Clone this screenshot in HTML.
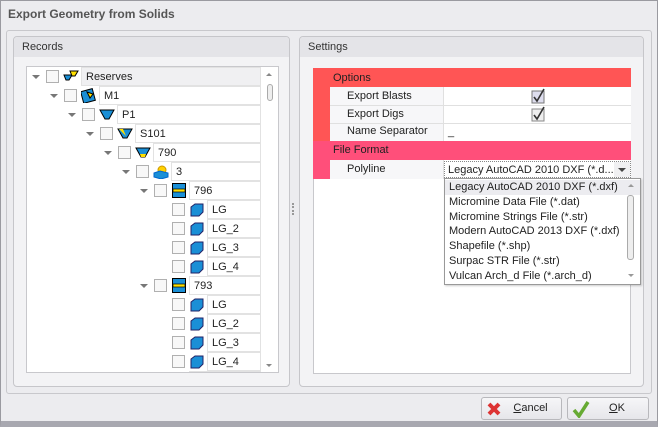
<!DOCTYPE html><html><head><style>
*{box-sizing:border-box;margin:0;padding:0}
body{width:658px;height:427px;background:#ececef;font-family:"Liberation Sans",sans-serif;font-size:11px;color:#222;position:relative;overflow:hidden}
.a{position:absolute}
.title{left:8px;top:7px;font-weight:bold;font-size:12px;color:#555}
.outer{left:6px;top:30px;width:646px;height:364px;border:1px solid #c8c8cc;border-radius:3px;background:#ececef}
.grp{border:1px solid #c6c6ca;border-radius:4px;background:#f3f3f5}
.gh{position:absolute;left:0;top:0;right:0;height:20px;background:#e4e4e8;padding:4px 8px;color:#333;border-radius:4px 4px 0 0}
.tree{left:26px;top:66px;width:253px;height:307px;border:1px solid #c8c8cc;background:#fff;overflow:hidden}
.row{position:absolute;height:19px;left:0;right:17px}
.exp{position:absolute;width:0;height:0;border-left:4px solid transparent;border-right:4px solid transparent;border-top:4px solid #777;top:8px}
.cb{position:absolute;width:13px;height:13px;border:1px solid #b0b0b0;background:#f8f8f8;top:3px}
.tx{position:absolute;top:0;height:19px;right:0;border:1px solid #e2e2e2;padding:3px 4px;background:#fff}
.ic{position:absolute;top:2px;width:16px;height:15px}
.dd div{height:14.8px;padding:1px 4px;white-space:nowrap}
.btn{height:23px;border:1px solid #b8b8bc;border-radius:3px;background:linear-gradient(#f6f6f8,#e6e6ea);text-align:center;line-height:21px}
</style></head><body>
<div class="a" style="left:0;top:0;width:658px;height:427px;border:1px solid #9a9aa0;border-bottom:6px solid #a8a8b0"></div>
<div class="a title">Export Geometry from Solids</div>
<div class="a outer"></div>
<div class="a grp" style="left:13px;top:36px;width:277px;height:351px"><div class="gh">Records</div></div>
<div class="a grp" style="left:299px;top:36px;width:345px;height:351px"><div class="gh">Settings</div></div>
<div class="a" style="left:292px;top:203px;width:2px;height:12px;border-left:2px dotted #999"></div>

<div class="a tree">
<div class="a" style="right:0;top:0;width:17px;height:307px;background:#fff"></div>
<div class="a" style="right:6px;top:6px;border-left:3px solid transparent;border-right:3px solid transparent;border-bottom:3px solid #888"></div>
<div class="a" style="right:5px;top:17px;width:6px;height:17px;border:1px solid #aaa;border-radius:3px;background:#eee"></div>
<div class="a" style="right:6px;top:297px;border-left:3px solid transparent;border-right:3px solid transparent;border-top:3px solid #888"></div>
<div class="row" style="top:0"><div class="exp" style="left:5px"></div><div class="cb" style="left:19px"></div>
<svg class="ic" style="left:36px" viewBox="0 0 16 15"><path d="M1 6h8l-3 5H3z" fill="#1a8fd6" stroke="#000"/><path d="M7 2h8l-3 5H9z" fill="#ffe000" stroke="#000"/></svg>
<div class="tx" style="left:54px;background:#f0f0f2">Reserves</div></div>
<div class="row" style="top:19px"><div class="exp" style="left:23px"></div><div class="cb" style="left:37px"></div>
<svg class="ic" style="left:54px" viewBox="0 0 16 15"><rect x="1" y="2" width="12" height="12" fill="#1a8fd6" stroke="#000" transform="rotate(-15 7 8)"/><path d="M6 4l6 2-3 4z" fill="#ffe000" stroke="#000"/></svg>
<div class="tx" style="left:72px">M1</div></div>
<div class="row" style="top:38px"><div class="exp" style="left:41px"></div><div class="cb" style="left:55px"></div>
<svg class="ic" style="left:72px" viewBox="0 0 16 15"><path d="M1 3h14l-5 9H6z" fill="#1a8fd6" stroke="#000"/></svg>
<div class="tx" style="left:90px">P1</div></div>
<div class="row" style="top:57px"><div class="exp" style="left:59px"></div><div class="cb" style="left:73px"></div>
<svg class="ic" style="left:90px" viewBox="0 0 16 15"><path d="M1 3h14l-5 9H6z" fill="#1a8fd6" stroke="#000"/><path d="M2 3h4l3 7z" fill="#ffe000"/></svg>
<div class="tx" style="left:108px">S101</div></div>
<div class="row" style="top:76px"><div class="exp" style="left:77px"></div><div class="cb" style="left:91px"></div>
<svg class="ic" style="left:108px" viewBox="0 0 16 15"><path d="M1 3h14l-5 9H6z" fill="#1a8fd6" stroke="#000"/><path d="M5 9h6l-1 3H6z" fill="#ffe000"/></svg>
<div class="tx" style="left:126px">790</div></div>
<div class="row" style="top:95px"><div class="exp" style="left:95px"></div><div class="cb" style="left:109px"></div>
<svg class="ic" style="left:126px" viewBox="0 0 16 15"><circle cx="9" cy="6" r="4" fill="#ffd000" stroke="#c90"/><path d="M1 9l6-2 8 2v4l-7 2-7-2z" fill="#1a8fd6" stroke="#06c"/></svg>
<div class="tx" style="left:144px">3</div></div>
<div class="row" style="top:114px"><div class="exp" style="left:113px"></div><div class="cb" style="left:127px"></div>
<svg class="ic" style="left:144px" viewBox="0 0 16 15"><rect x="1.5" y="0.5" width="13" height="14" fill="#1a8fd6" stroke="#000"/><rect x="2" y="6" width="12" height="3" fill="#ffe000" stroke="#000" stroke-width=".7"/></svg>
<div class="tx" style="left:162px">796</div></div>
<div class="row" style="top:133px"><div class="cb" style="left:145px"></div><svg class="ic" style="left:162px" viewBox="0 0 16 15"><path d="M2 5l4-3h8v8l-4 4H2z" fill="#1a8fd6" stroke="#226"/></svg><div class="tx" style="left:180px">LG</div></div>
<div class="row" style="top:152px"><div class="cb" style="left:145px"></div><svg class="ic" style="left:162px" viewBox="0 0 16 15"><path d="M2 5l4-3h8v8l-4 4H2z" fill="#1a8fd6" stroke="#226"/></svg><div class="tx" style="left:180px">LG_2</div></div>
<div class="row" style="top:171px"><div class="cb" style="left:145px"></div><svg class="ic" style="left:162px" viewBox="0 0 16 15"><path d="M2 5l4-3h8v8l-4 4H2z" fill="#1a8fd6" stroke="#226"/></svg><div class="tx" style="left:180px">LG_3</div></div>
<div class="row" style="top:190px"><div class="cb" style="left:145px"></div><svg class="ic" style="left:162px" viewBox="0 0 16 15"><path d="M2 5l4-3h8v8l-4 4H2z" fill="#1a8fd6" stroke="#226"/></svg><div class="tx" style="left:180px">LG_4</div></div>
<div class="row" style="top:209px"><div class="exp" style="left:113px"></div><div class="cb" style="left:127px"></div>
<svg class="ic" style="left:144px" viewBox="0 0 16 15"><rect x="1.5" y="0.5" width="13" height="14" fill="#1a8fd6" stroke="#000"/><rect x="2" y="6" width="12" height="3" fill="#ffe000" stroke="#000" stroke-width=".7"/></svg>
<div class="tx" style="left:162px">793</div></div>
<div class="row" style="top:228px"><div class="cb" style="left:145px"></div><svg class="ic" style="left:162px" viewBox="0 0 16 15"><path d="M2 5l4-3h8v8l-4 4H2z" fill="#1a8fd6" stroke="#226"/></svg><div class="tx" style="left:180px">LG</div></div>
<div class="row" style="top:247px"><div class="cb" style="left:145px"></div><svg class="ic" style="left:162px" viewBox="0 0 16 15"><path d="M2 5l4-3h8v8l-4 4H2z" fill="#1a8fd6" stroke="#226"/></svg><div class="tx" style="left:180px">LG_2</div></div>
<div class="row" style="top:266px"><div class="cb" style="left:145px"></div><svg class="ic" style="left:162px" viewBox="0 0 16 15"><path d="M2 5l4-3h8v8l-4 4H2z" fill="#1a8fd6" stroke="#226"/></svg><div class="tx" style="left:180px">LG_3</div></div>
<div class="row" style="top:285px"><div class="cb" style="left:145px"></div><svg class="ic" style="left:162px" viewBox="0 0 16 15"><path d="M2 5l4-3h8v8l-4 4H2z" fill="#1a8fd6" stroke="#226"/></svg><div class="tx" style="left:180px">LG_4</div></div>
<div class="row" style="top:304px"><div class="cb" style="left:127px"></div><svg class="ic" style="left:144px" viewBox="0 0 16 15"><rect x="1.5" y="0.5" width="13" height="14" fill="#1a8fd6" stroke="#000"/></svg><div class="tx" style="left:162px"></div></div>
</div>

<div class="a" style="left:313px;top:68px;width:318px;height:306px;border:1px solid #c8c8cc;background:#fff"></div>
<div class="a" style="left:313px;top:68px;width:318px;height:73px;background:#ff5555"></div>
<div class="a" style="left:313px;top:141px;width:318px;height:38px;background:#ff4f7a"></div>
<div class="a" style="left:333px;top:72px">Options</div>
<div class="a" style="left:333px;top:144px">File Format</div>
<div class="a" style="left:330px;top:87px;width:301px;height:54px;background:#fff"></div>
<div class="a" style="left:330px;top:160px;width:301px;height:19px;background:#fff"></div>
<div class="a" style="left:330px;top:87px;width:114px;height:54px;background:#f7f7f9"></div>
<div class="a" style="left:330px;top:160px;width:114px;height:19px;background:#f7f7f9"></div>
<div class="a" style="left:330px;top:105px;width:301px;border-top:1px solid #e0e0e0"></div>
<div class="a" style="left:330px;top:123px;width:301px;border-top:1px solid #e0e0e0"></div>
<div class="a" style="left:443px;top:87px;height:54px;border-left:1px solid #e0e0e0"></div>
<div class="a" style="left:443px;top:160px;height:19px;border-left:1px solid #e0e0e0"></div>
<div class="a" style="left:347px;top:90px">Export Blasts</div>
<div class="a" style="left:347px;top:108px">Export Digs</div>
<div class="a" style="left:347px;top:125px">Name Separator</div>
<div class="a" style="left:347px;top:163px">Polyline</div>
<div class="a" style="left:448px;top:126px">_</div>
<svg class="a" style="left:531px;top:88px" width="14" height="16"><rect x="1" y="3" width="12" height="12" fill="#dde" stroke="#777"/><path d="M3 9l3 4 7-12" fill="none" stroke="#333" stroke-width="1.6"/></svg>
<svg class="a" style="left:531px;top:106px" width="14" height="16"><rect x="1" y="3" width="12" height="12" fill="#eee" stroke="#888"/><path d="M3 9l3 4 7-12" fill="none" stroke="#333" stroke-width="1.6"/></svg>
<div class="a" style="left:444px;top:161px;width:187px;height:17px;border:1px dotted #888;padding:2px 3px;white-space:nowrap;overflow:hidden">Legacy AutoCAD 2010 DXF (*.d...</div>
<div class="a" style="left:614px;top:162px;width:16px;height:15px;background:#f0f0f2"></div>
<div class="a" style="left:618px;top:168px;border-left:4px solid transparent;border-right:4px solid transparent;border-top:4px solid #444"></div>
<div class="a dd" style="left:444px;top:178px;width:197px;height:107px;border:1px solid #999;background:#fff;padding-top:1px;box-shadow:1px 1px 2px rgba(0,0,0,.2)">
<div style="background:#ececf0">Legacy AutoCAD 2010 DXF (*.dxf)</div>
<div>Micromine Data File (*.dat)</div><div>Micromine Strings File (*.str)</div><div>Modern AutoCAD 2013 DXF (*.dxf)</div><div>Shapefile (*.shp)</div><div>Surpac STR File (*.str)</div><div>Vulcan Arch_d File (*.arch_d)</div>
</div>
<div class="a" style="left:628px;top:184px;border-left:3px solid transparent;border-right:3px solid transparent;border-bottom:3px solid #999"></div>
<div class="a" style="left:627px;top:195px;width:7px;height:65px;border:1px solid #aaa;border-radius:3px;background:#eee"></div>
<div class="a" style="left:628px;top:274px;border-left:3px solid transparent;border-right:3px solid transparent;border-top:3px solid #999"></div>

<div class="a btn" style="left:481px;top:397px;width:81px"><svg class="a" style="left:4px;top:3px" width="16" height="16"><path d="M3 3l10 10M13 3L3 13" stroke="#d33" stroke-width="4"/></svg><span style="margin-left:18px"><u>C</u>ancel</span></div>
<div class="a btn" style="left:567px;top:397px;width:82px"><svg class="a" style="left:4px;top:2px" width="18" height="18"><path d="M2 10l5 6L16 2" fill="none" stroke="#6a3" stroke-width="3.5"/></svg><span style="margin-left:18px"><u>O</u>K</span></div>
</body></html>
